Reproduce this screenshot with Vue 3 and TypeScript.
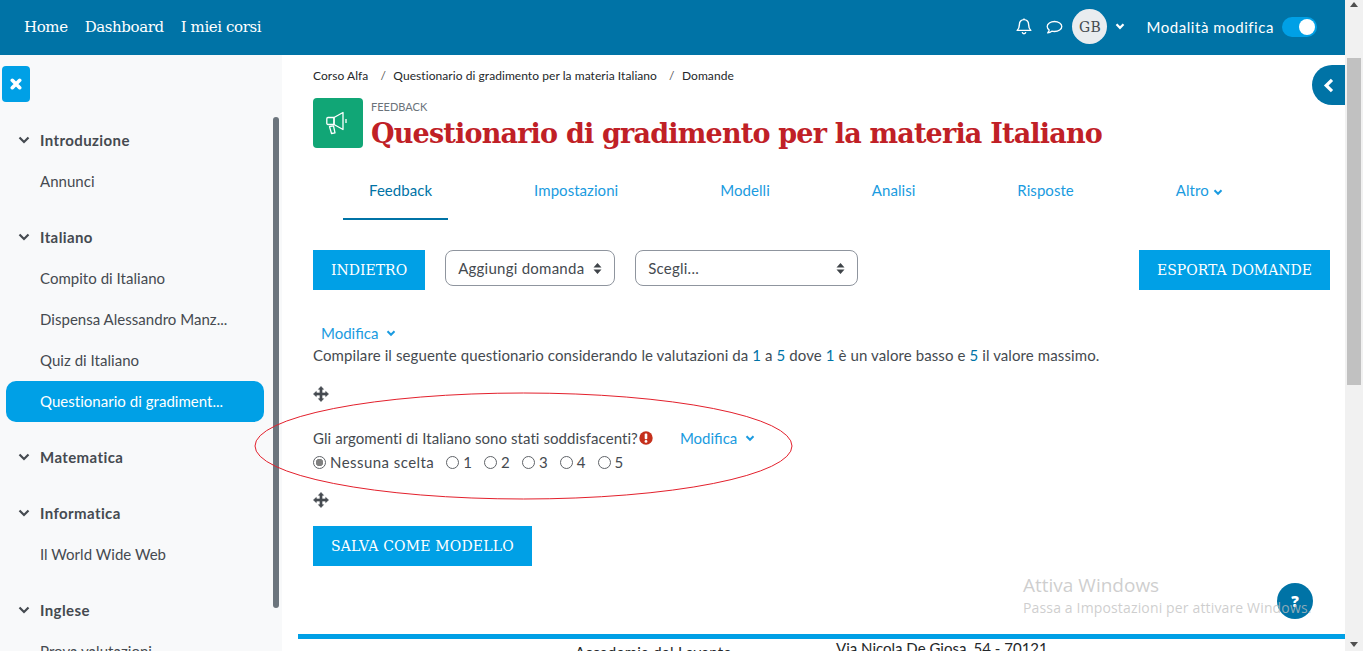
<script setup lang="ts">
const navItems: string[] = ['Home', 'Dashboard', 'I miei corsi']
const sections: { title: string; items: string[] }[] = [
  { title: 'Introduzione', items: ['Annunci'] },
  { title: 'Italiano', items: ['Compito di Italiano', 'Dispensa Alessandro Manz...', 'Quiz di Italiano', 'Questionario di gradiment...'] },
  { title: 'Matematica', items: [] },
  { title: 'Informatica', items: ['Il World Wide Web'] },
  { title: 'Inglese', items: ['Prova valutazioni'] }
]
const tabs: string[] = ['Feedback', 'Impostazioni', 'Modelli', 'Analisi', 'Risposte']
const options: string[] = ['1', '2', '3', '4', '5']
</script>

<template>
  <div class="page">
    <header class="topbar">
      <nav class="topnav">
        <a v-for="n in navItems" :key="n" class="topnav-link">{{ n }}</a>
      </nav>
      <div class="top-right">
        <svg class="ic-bell" width="16" height="17" viewBox="0 0 16 17" fill="none" stroke="#fff" stroke-width="1.4" stroke-linejoin="round">
          <path d="M8 1.600c-2.900 0-4.600 2.200-4.600 4.800 0 3.600-1.200 4.900-2.200 6h13.600c-1-1.100-2.200-2.400-2.200-6 0-2.600-1.700-4.800-4.600-4.800z" />
          <path d="M6.200 14.200c.2 1 1 1.500 1.800 1.500s1.600-.5 1.800-1.500" />
          <path d="M8 .5v1.200" />
        </svg>
        <svg class="ic-chat" width="17" height="15" viewBox="0 0 17 15" fill="none" stroke="#fff" stroke-width="1.300" stroke-linejoin="round">
          <path d="M8.500 1.500c-4 0-7.300 2.300-7.300 5 0 1.300.8 2.500 2 3.400-.2 1.200-.9 2.300-1.500 3 1.500-.2 3.100-.9 4.100-1.700.8.200 1.700.3 2.700.3 4 0 7.300-2.300 7.300-5s-3.300-5-7.300-5z" />
        </svg>
        <div class="avatar">GB</div>
        <svg class="ic-caret" width="10" height="7" viewBox="0 0 10 7" fill="none" stroke="#fff" stroke-width="2.200"><path d="M1.500 1.200L5 4.800l3.500-3.600" /></svg>
        <span class="edit-label">Modalità modifica</span>
        <span class="switch"><span class="knob"></span></span>
      </div>
    </header>

    <div class="body-row">
      <aside class="sidebar">
        <button class="close-btn" type="button" aria-label="Chiudi">
          <svg width="12" height="12" viewBox="0 0 12 12" stroke="#fff" stroke-width="3.600" stroke-linecap="round"><path d="M2.300 2.300l7.400 7.400M9.700 2.300l-7.400 7.400" /></svg>
        </button>
        <div class="course-index">
          <section v-for="s in sections" :key="s.title" class="section">
            <div class="section-head">
              <svg width="12" height="8" viewBox="0 0 12 8" fill="none" stroke="#454a50" stroke-width="2.200"><path d="M1.500 1.500L6 6l4.500-4.500" /></svg>
              <span>{{ s.title }}</span>
            </div>
            <div
              v-for="i in s.items"
              :key="i"
              class="section-item"
              :class="{ active: i.startsWith('Questionario') }"
            >{{ i }}</div>
          </section>
        </div>
      </aside>

      <main class="main">
        <div class="breadcrumb">
          <span>Corso Alfa</span><i>/</i><span>Questionario di gradimento per la materia Italiano</span><i>/</i><span>Domande</span>
        </div>
        <div class="heading">
          <div class="activity-icon">
            <svg width="26" height="26" viewBox="0 0 26 26" fill="none" stroke="#fff" stroke-width="1.300" stroke-linejoin="round">
              <path d="M3 7.500h6v7H3c-.8 0-1.200-.6-1.200-1.200V8.700c0-.7.400-1.200 1.200-1.200z" />
              <path d="M9 7.500L18 2.500v17L9 14.500z" />
              <path d="M21 9v4" />
              <path d="M4.500 16.500l4-.6 1.500 7-3.500.6z" />
            </svg>
          </div>
          <div class="heading-text">
            <div class="kicker">FEEDBACK</div>
            <h1 class="title">Questionario di gradimento per la materia Italiano</h1>
          </div>
        </div>

        <nav class="tabs">
          <a v-for="(t, idx) in tabs" :key="t" class="tab" :class="{ current: idx === 0 }">{{ t }}</a>
          <a class="tab">Altro
            <svg width="10" height="7" viewBox="0 0 10 7" fill="none" stroke="#1a9be0" stroke-width="2"><path d="M1.500 1.200L5 4.800l3.500-3.600" /></svg>
          </a>
        </nav>

        <div class="toolbar">
          <button class="btn" type="button">INDIETRO</button>
          <div class="select sel-a">
            <span>Aggiungi domanda</span>
            <svg width="9" height="13" viewBox="0 0 9 13" fill="#3f4449"><path d="M4.500 1L8.500 5.500H.5zM4.500 12L.5 7.500h8z" /></svg>
          </div>
          <div class="select sel-b">
            <span>Scegli...</span>
            <svg width="9" height="13" viewBox="0 0 9 13" fill="#3f4449"><path d="M4.500 1L8.500 5.500H.5zM4.500 12L.5 7.500h8z" /></svg>
          </div>
          <button class="btn btn-export" type="button">ESPORTA DOMANDE</button>
        </div>

        <a class="modifica first">Modifica
          <svg width="10" height="7" viewBox="0 0 10 7" fill="none" stroke="#1a9be0" stroke-width="2"><path d="M1.500 1.200L5 4.800l3.500-3.600" /></svg>
        </a>
        <p class="intro">Compilare il seguente questionario considerando le valutazioni da <b>1</b> a <b>5</b> dove <b>1</b> è un valore basso e <b>5</b> il valore massimo.</p>

        <svg class="move m1" width="16" height="16" viewBox="0 0 16 16" fill="#454a50" stroke="#454a50" stroke-width="0.700" stroke-linejoin="round">
          <path d="M8 .5l2.500 2.800H9V7h3.700V5.500L15.500 8l-2.800 2.500V9H9v3.700h1.500L8 15.500l-2.500-2.800H7V9H3.300v1.500L.5 8l2.800-2.500V7H7V3.300H5.500z" />
        </svg>
        <div class="question">
          <span>Gli argomenti di Italiano sono stati soddisfacenti?</span>
          <svg class="req" width="14" height="14" viewBox="0 0 14 14">
            <circle cx="7" cy="7" r="6.700" fill="#c5301c" />
            <rect x="5.700" y="2.600" width="2.600" height="5.600" rx="1" fill="#fff" />
            <circle cx="7" cy="10.400" r="1.400" fill="#fff" />
          </svg>
          <a class="modifica inline">Modifica
            <svg width="10" height="7" viewBox="0 0 10 7" fill="none" stroke="#1a9be0" stroke-width="2"><path d="M1.500 1.200L5 4.800l3.500-3.600" /></svg>
          </a>
        </div>
        <div class="choices">
          <label class="choice none"><input type="radio" name="q" checked />Nessuna scelta</label>
          <label v-for="o in options" :key="o" class="choice"><input type="radio" name="q" />{{ o }}</label>
        </div>
        <svg class="move m2" width="16" height="16" viewBox="0 0 16 16" fill="#454a50" stroke="#454a50" stroke-width="0.700" stroke-linejoin="round">
          <path d="M8 .5l2.500 2.800H9V7h3.700V5.500L15.500 8l-2.800 2.500V9H9v3.700h1.500L8 15.500l-2.500-2.800H7V9H3.300v1.500L.5 8l2.800-2.500V7H7V3.300H5.500z" />
        </svg>
        <button class="btn btn-save" type="button">SALVA COME MODELLO</button>

        <footer class="footer">
          <div class="foot-a">Accademia del Levante</div>
          <div class="foot-b">Via Nicola De Giosa, 54 - 70121</div>
        </footer>
      </main>

      <div class="page-scroll">
        <span class="arrow up"></span>
        <span class="thumb"></span>
        <span class="arrow down"></span>
      </div>
    </div>

    <span class="side-scroll"></span>
    <button class="drawer-tab" type="button" aria-label="Apri">
      <svg width="11" height="15" viewBox="0 0 11 15" fill="none" stroke="#fff" stroke-width="3.200"><path d="M9 1.800L3.200 7.500 9 13.200" /></svg>
    </button>
    <svg class="ellipse" width="539" height="108" viewBox="0 0 539 108">
      <ellipse cx="269.500" cy="54" rx="268.500" ry="53" fill="none" stroke="#e3202c" stroke-width="1" />
    </svg>
    <button class="help" type="button" aria-label="Aiuto">?</button>
    <div class="watermark">
      <div class="wm-1">Attiva Windows</div>
      <div class="wm-2">Passa a Impostazioni per attivare Windows.</div>
    </div>
  </div>
</template>

<style>
html, body { margin: 0; overflow: hidden; }
</style>

<style scoped>
.page {
  position: relative;
  width: 1363px;
  height: 651px;
  overflow: hidden;
  background: #fff;
  color: #454a50;
  font-family: Lato, "Open Sans", sans-serif;
  font-size: 15px;
  letter-spacing: 0.1px;
}
.topbar {
  height: 55px;
  width: 1345px;
  background: #0073a6;
  display: flex;
  align-items: center;
  justify-content: space-between;
  color: #fff;
}
.topnav { display: flex; gap: 17px; padding-left: 24px; padding-bottom: 2px; }
.topnav-link { font-family: "DejaVu Serif", serif; font-size: 15px; letter-spacing: -0.4px; color: #fff; }
.top-right { display: flex; align-items: center; padding-right: 28px; padding-bottom: 2px; }
.ic-bell { margin-right: 14px; }
.ic-chat { margin-right: 9px; margin-top: 2px; }
.avatar {
  width: 35px; height: 35px; border-radius: 50%;
  background: #e9ecef; color: #454a50;
  display: flex; align-items: center; justify-content: center;
  font-family: "DejaVu Serif", serif; font-size: 14px;
}
.ic-caret { margin-left: 8px; }
.edit-label { margin-left: 21px; font-size: 15px; letter-spacing: 0.55px; }
.switch {
  margin-left: 8px; width: 35px; height: 20px; border-radius: 10px;
  background: #00a0e6; display: flex; align-items: center; justify-content: flex-end; padding-right: 2px; box-sizing: border-box;
}
.knob { width: 16px; height: 16px; border-radius: 50%; background: #fff; }
.body-row { display: flex; height: 596px; }
.sidebar { width: 282px; flex: none; background: #f8f9fa; box-sizing: border-box; padding-top: 11px; }
.close-btn {
  margin-left: 2px; width: 28px; height: 36px; border: 0; border-radius: 4px;
  background: #00a0e6; display: flex; align-items: center; justify-content: center; padding: 0;
}
.course-index { margin-top: 17.500px; }
.section { margin-bottom: 15px; }
.section-head {
  height: 41px; display: flex; align-items: center; gap: 10px; padding-left: 18px;
  font-weight: 700; color: #454a50; font-size: 15px; letter-spacing: 0.4px;
}
.section-item {
  height: 41px; line-height: 41px; margin: 0 18px 0 6px; padding-left: 34px; box-sizing: border-box;
  border-radius: 10px; font-size: 15px; white-space: nowrap; letter-spacing: 0.03px;
}
.section-item.active { background: #00a0e6; color: #fff; }
.main { flex: 1; min-width: 0; box-sizing: border-box; padding: 0 15px 0 31px; position: relative; }
.breadcrumb { margin-top: 14px; height: 14px; line-height: 14px; font-size: 12px; color: #24272a; white-space: nowrap; display: flex; letter-spacing: 0.06px; }
.breadcrumb i { font-style: normal; margin: 0 7.500px 0 12px; color: #555; }
.heading { display: flex; margin-top: 15px; height: 50px; }
.activity-icon {
  width: 50px; height: 50px; border-radius: 4px; background: #11a676; flex: none;
  display: flex; align-items: center; justify-content: center;
}
.heading-text { margin-left: 8px; }
.kicker { font-size: 11px; line-height: 14px; color: #6a737b; margin-top: 2px; letter-spacing: 0; }
.title {
  margin: 3px 0 0; font-family: "DejaVu Serif", serif; font-weight: 700; font-size: 27px; line-height: 34px;
  color: #c02026; white-space: nowrap; letter-spacing: -0.800px;
}
.tabs { display: flex; margin: 21px 0 0 30px; gap: 50px; height: 53px; }
.tab {
  padding: 0 26px; color: #1a9be0; font-size: 15px; line-height: 42px; height: 53px; box-sizing: border-box;
  white-space: nowrap; letter-spacing: 0.05px;
}
.tab.current { color: #0073a6; border-bottom: 2px solid #0073a6; height: 51px; padding-right: 16px; margin-right: 10px; }
.toolbar { display: flex; align-items: flex-start; margin-top: 28px; }
.btn {
  height: 40px; border: 0; background: #00a0e6; color: #fff; padding: 0 18px;
  font-family: "DejaVu Serif", serif; font-size: 14px; letter-spacing: 0; white-space: nowrap;
}
.btn-export { margin-left: auto; }
.select {
  height: 36px; box-sizing: border-box; border: 1px solid #8f959e; border-radius: 8px;
  display: flex; align-items: center; justify-content: space-between; padding: 0 12px;
  font-size: 15px; color: #454a50; letter-spacing: 0.25px;
}
.sel-a { width: 170px; margin-left: 20px; }
.sel-b { width: 223px; margin-left: 20px; }
.modifica { color: #1a9be0; font-size: 15px; display: inline-flex; align-items: center; gap: 8px; letter-spacing: 0; }
.modifica.first { margin: 33px 0 0 8px; height: 20px; display: flex; width: max-content; }
.intro { margin: 2px 0 0; line-height: 20px; font-size: 15px; white-space: nowrap; }
.intro b { font-weight: 400; color: #0073a6; }
.move { display: block; }
.m1 { margin-top: 21px; }
.question { display: flex; align-items: center; margin-top: 26px; height: 20px; white-space: nowrap; letter-spacing: 0.07px; }
.req { margin-left: 1px; }
.modifica.inline { margin-left: 27px; }
.choices { display: flex; margin-top: 3px; height: 22px; align-items: center; }
.choice { display: inline-flex; align-items: center; margin-right: 12px; }
.choice.none { letter-spacing: 0.45px; }
.choice input {
  appearance: none; margin: 0 4px 0 0; width: 13px; height: 13px; border: 1px solid #5f6368; border-radius: 50%;
  box-sizing: border-box; background: #fff;
}
.choice input:checked { background: radial-gradient(circle, #808080 0, #808080 3.500px, #fff 4px); }
.m2 { margin-top: 19px; }
.btn-save { display: block; margin-top: 18px; letter-spacing: 0.18px; }
.footer { position: absolute; left: 16px; right: 0; top: 579px; border-top: 5px solid #00a0e6; height: 30px; color: #24272a; font-size: 15px; white-space: nowrap; }
.foot-a { position: absolute; left: 277px; top: 4px; letter-spacing: 0.3px; }
.foot-b { position: absolute; left: 538px; top: 0; letter-spacing: 0; }
.page-scroll { width: 18px; flex: none; position: relative; background: #f1f1f1; margin-top: -55px; height: 651px; }
.arrow { position: absolute; left: 5px; width: 0; height: 0; border-left: 4px solid transparent; border-right: 4px solid transparent; }
.arrow.up { top: 2px; border-bottom: 5px solid #505050; }
.arrow.down { bottom: 4px; border-top: 5px solid #505050; }
.thumb { position: absolute; left: 2px; right: 2px; top: 58px; height: 327px; background: #c1c1c1; }
.side-scroll { position: absolute; left: 273px; top: 117px; width: 6px; height: 491px; border-radius: 3px; background: #6c757d; }
.drawer-tab {
  position: absolute; left: 1312px; top: 65px; width: 33px; height: 40px; border: 0; padding: 0;
  border-radius: 20px 0 0 20px; background: #0073a6; display: flex; align-items: center; justify-content: center;
}
.ellipse { position: absolute; left: 254px; top: 392px; pointer-events: none; }
.watermark { position: absolute; left: 1023px; top: 573px; color: rgba(190, 190, 190, 0.75); font-family: "Open Sans", sans-serif; white-space: nowrap; letter-spacing: 0; pointer-events: none; }
.wm-1 { font-size: 19px; line-height: 25px; }
.wm-2 { font-size: 14px; line-height: 18px; letter-spacing: 0.15px; padding-top: 1px; }
.help {
  position: absolute; left: 1277px; top: 583px; width: 36px; height: 36px; border-radius: 50%; border: 0; padding: 0;
  background: #0073a6; color: #fff; font-family: "Open Sans", sans-serif; font-weight: 800; font-size: 15px; text-align: center;
}
</style>
